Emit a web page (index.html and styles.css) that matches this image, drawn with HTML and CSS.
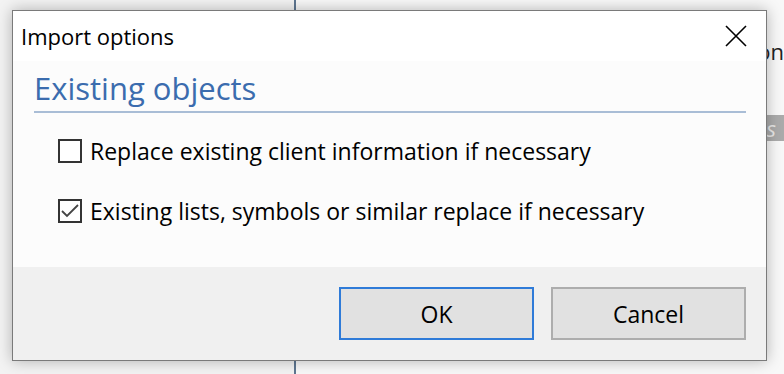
FILE: index.html
```html
<!DOCTYPE html>
<html lang="en">
  <head>
    <meta charset="UTF-8" />
    <meta name="viewport" content="width=device-width, initial-scale=1.0" />
    <title>Import options</title>
    <link rel="stylesheet" href="styles.css">
  </head>
  <body>
    <div class="backdrop">
      <div class="side-pane"></div>
      <div class="main-pane">
        <div class="pane-label">Description</div>
        <div class="pane-bar">Items</div>
      </div>
    </div>

    <div class="dialog">
      <div class="title-bar">
        <span class="title">Import options</span>
        <button class="close-btn" aria-label="Close">
          <svg width="22" height="22" viewBox="0 0 22 22">
            <path d="M1 1 L21 21 M21 1 L1 21" stroke="#000" stroke-width="1.6" fill="none" />
          </svg>
        </button>
      </div>

      <div class="content">
        <h2 class="group-title">Existing objects</h2>

        <label class="check-row">
          <span class="check-box"></span>
          <span>Replace existing client information if necessary</span>
        </label>

        <label class="check-row">
          <span class="check-box checked">
            <svg width="20" height="20" viewBox="0 0 20 20">
              <polyline points="2,10 7,15 18,4" stroke="#444" stroke-width="1.8" fill="none" />
            </svg>
          </span>
          <span>Existing lists, symbols or similar replace if necessary</span>
        </label>
      </div>

      <div class="footer">
        <button class="btn btn-default">OK</button>
        <button class="btn">Cancel</button>
      </div>
    </div>
  </body>
</html>
```

FILE: styles.css
```css
html,
body {
  margin: 0;
  padding: 0;
}
body {
  width: 784px;
  height: 374px;
  overflow: hidden;
  position: relative;
  background-color: #f3f3f3;
  font-family: "Open Sans", "Noto Sans", sans-serif;
  color: #000;
}

/* app window behind the dialog */
.backdrop {
  display: flex;
  height: 100%;
}
.side-pane {
  width: 294px;
  border-right: 2px solid #5e7691;
}
.main-pane {
  flex: 1;
  background: #f8f8f8;
  padding-top: 36px;
  overflow: hidden;
}
.pane-label {
  font-size: 22px;
  text-align: right;
  color: #222;
  height: 79px;
}
.pane-bar {
  background: #ababab;
  color: #e8e8e8;
  font-size: 22px;
  font-style: italic;
  height: 26px;
  line-height: 26px;
  text-align: right;
  padding-right: 8px;
}

/* dialog */
.dialog {
  position: absolute;
  left: 12px;
  top: 10px;
  width: 755px;
  box-sizing: border-box;
  border: 1px solid #7a7a7a;
  background: #fff;
  box-shadow: 0 0 14px rgba(0, 0, 0, 0.28);
  display: flex;
  flex-direction: column;
}
.title-bar {
  height: 50px;
  display: flex;
  align-items: center;
  justify-content: space-between;
  padding-left: 8px;
  padding-right: 19px;
  background: #fff;
}
.title {
  font-size: 22px;
}
.close-btn {
  background: none;
  border: none;
  padding: 0;
  width: 22px;
  height: 22px;
  display: flex;
}
.content {
  height: 206px;
  box-sizing: border-box;
  background: #fcfcfc;
  padding: 5px 20px 0 21px;
}
.group-title {
  margin: 0 0 26px;
  font-size: 31px;
  font-weight: normal;
  color: #3b6cae;
  line-height: 45px;
  border-bottom: 2px solid #a9bdd6;
}
.check-row {
  display: flex;
  align-items: center;
  gap: 8px;
  margin-left: 24px;
  margin-bottom: 36px;
  font-size: 23px;
  height: 24px;
}
.check-box {
  width: 24px;
  height: 24px;
  box-sizing: border-box;
  border: 2px solid #333;
  background: #fff;
  display: flex;
  align-items: center;
  justify-content: center;
}
.footer {
  height: 93px;
  background: #f0f0f0;
  display: flex;
  align-items: center;
  justify-content: flex-end;
  gap: 17px;
  padding-right: 20px;
}
.btn {
  width: 195px;
  height: 53px;
  box-sizing: border-box;
  background: #e1e1e1;
  border: 2px solid #adadad;
  font-family: inherit;
  font-size: 23px;
  color: #000;
  padding: 0;
}
.btn-default {
  border-color: #2f7bd8;
}
```
